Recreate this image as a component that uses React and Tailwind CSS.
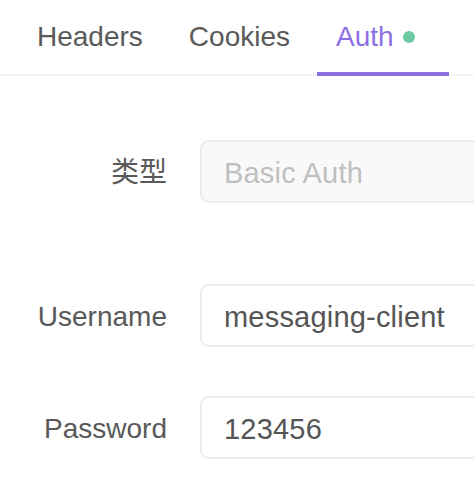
import React from "react";

const font = { fontFamily: "'Liberation Sans', 'Noto Sans CJK SC', sans-serif" };

function Row({ label, value, disabled, className }) {
  return (
    <div className={"flex items-center " + (className || "")}>
      <div className="w-[167px] shrink-0 text-right text-[28px] leading-[32px] text-[#595959] pt-[3px]">{label}</div>
      <div
        className={
          "ml-[33px] h-[63px] w-[420px] shrink-0 flex items-center rounded-[9px] border-2 pl-[22px] pt-[2px] text-[29px] leading-[32px] tracking-[0.2px] " +
          (disabled ? "bg-[#f9f9f9] border-[#ececec] text-[#bfbfbf]" : "bg-white border-[#ececec] text-[#555555]")
        }
      >
        {value}
      </div>
    </div>
  );
}

export default function App() {
  return (
    <div className="w-[474px] h-[482px] overflow-hidden bg-white" style={font}>
      <div className="flex h-[76px] border-b-2 border-[#f2f2f2] pl-[18px] gap-2">
        <div className="px-[19px] pt-[21px] text-[28px] leading-[32px] text-[#5a5a5a]">Headers</div>
        <div className="px-[19px] pt-[21px] text-[28px] leading-[32px] text-[#5a5a5a]">Cookies</div>
        <div className="w-[132px] -mb-[2px] border-b-4 border-[#8d6fe3] pl-[19px] pt-[21px] flex items-start">
          <span className="text-[28px] leading-[32px] text-[#8d6fe3]">Auth</span>
          <span className="ml-[9px] mt-[10px] h-[12px] w-[12px] rounded-full bg-[#6cc9a1]"></span>
        </div>
      </div>
      <Row label="类型" value="Basic Auth" disabled className="mt-[64px]" />
      <Row label="Username" value="messaging-client" className="mt-[81px]" />
      <Row label="Password" value="123456" className="mt-[49px]" />
    </div>
  );
}
